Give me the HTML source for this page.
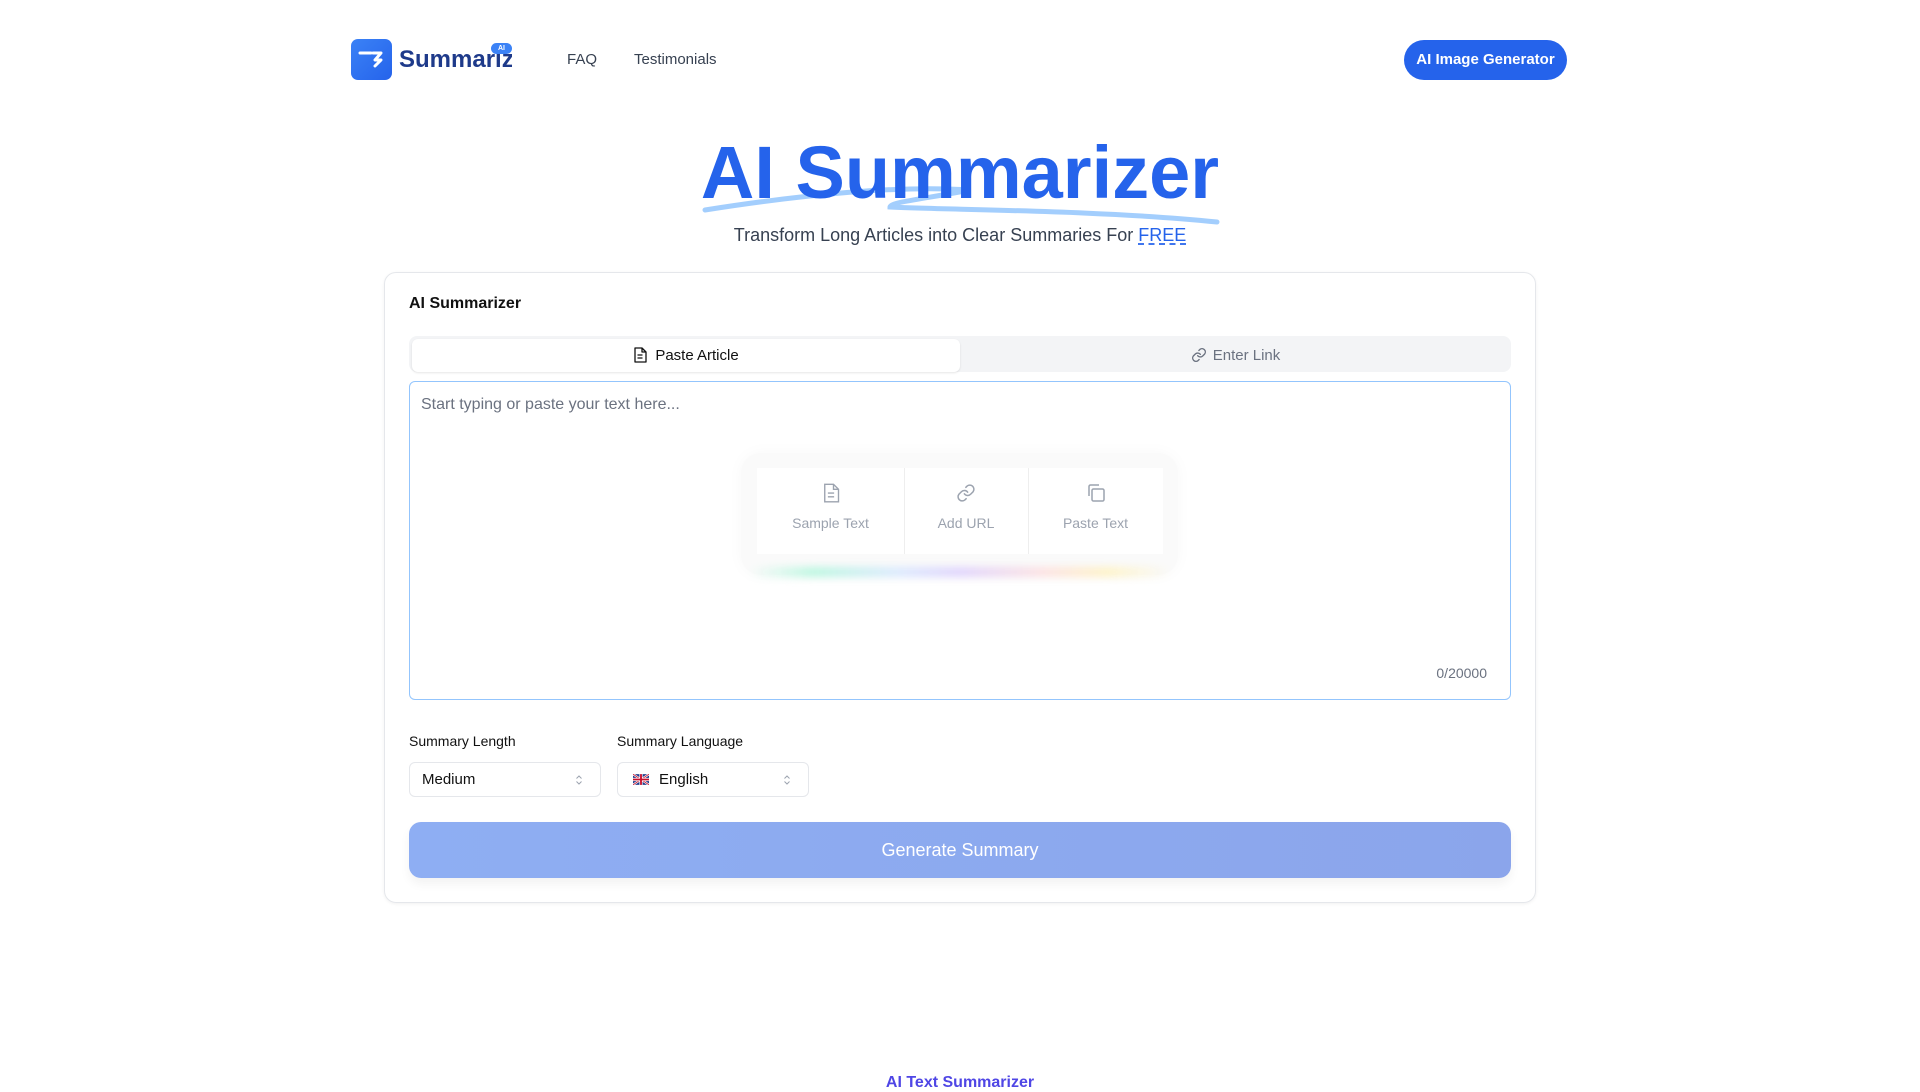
<!DOCTYPE html>
<html><head><meta charset="utf-8">
<style>
*{box-sizing:border-box;margin:0;padding:0}
html,body{width:1920px;height:1080px;overflow:hidden;background:#fff;font-family:"Liberation Sans",sans-serif;color:#111}
.abs{position:absolute}
</style></head><body>
<!-- header -->
<div class="abs" style="left:351px;top:39px;width:41px;height:41px;border-radius:7px;background:linear-gradient(135deg,#3b82f6,#2563eb)">
<svg width="41" height="41" viewBox="0 0 41 41"><path d="M9 14h11M22 14h8l-6 7 6 0-6 6" stroke="#fff" stroke-width="3" fill="none" stroke-linecap="round" stroke-linejoin="round"/></svg>
</div>
<div class="abs" style="left:399px;top:46px;width:113px;height:30px;overflow:hidden;font-size:24px;font-weight:bold;color:#1e3a8a;white-space:nowrap">Summarizer</div>
<div class="abs" style="left:491px;top:43px;width:21px;height:11px;border-radius:6px;background:#3b82f6;color:#fff;font-size:7px;font-weight:bold;text-align:center;line-height:11px">AI</div>
<div class="abs" style="left:567px;top:51px;font-size:15px;color:#374151">FAQ</div>
<div class="abs" style="left:634px;top:51px;font-size:15px;color:#374151">Testimonials</div>
<div class="abs" style="left:1404px;top:40px;width:163px;height:40px;border-radius:20px;background:#2563eb;color:#fff;font-size:15px;font-weight:bold;text-align:center;line-height:40px">AI Image Generator</div>

<!-- hero -->
<svg class="abs" style="left:700px;top:170px" width="520" height="60" viewBox="0 0 520 60">
<path d="M5 40 C100 25 200 15 270 20 C230 28 190 32 190 37 C250 40 400 40 517 52" stroke="#93c5fd" stroke-width="5" fill="none" stroke-linecap="round" opacity="0.85"/>
</svg>
<div class="abs" style="left:0;width:1920px;top:128px;text-align:center;font-size:74px;font-weight:bold;color:#2563eb;line-height:90px">AI Summarizer</div>
<div class="abs" style="left:0;width:1920px;top:225px;text-align:center;font-size:18px;color:#374151">Transform Long Articles into Clear Summaries For <span style="color:#2563eb;text-decoration:underline dashed;text-underline-offset:3px">FREE</span></div>

<!-- card -->
<div class="abs" style="left:384px;top:272px;width:1152px;height:631px;border:1px solid #e5e7eb;border-radius:12px;box-shadow:0 1px 3px rgba(0,0,0,.06)"></div>
<div class="abs" style="left:409px;top:295px;font-size:16px;font-weight:bold;color:#111">AI Summarizer</div>
<div class="abs" style="left:409px;top:336px;width:1102px;height:36px;border-radius:8px;background:#f3f4f6"></div>
<div class="abs" style="left:412px;top:339px;width:548px;height:33px;border-radius:6px;background:#fff;box-shadow:0 1px 2px rgba(0,0,0,.1);font-size:15px;color:#111;text-align:center;line-height:33px">
<svg width="14" height="16" viewBox="0 0 14 16" style="vertical-align:-3px;margin-right:8px"><path d="M2 1h7l4 4v10H2z M9 1v4h4 M4.5 8h5M4.5 11h5" stroke="#111" stroke-width="1.3" fill="none" stroke-linejoin="round"/></svg>Paste Article</div>
<div class="abs" style="left:960px;top:339px;width:551px;height:33px;font-size:15px;color:#6b7280;text-align:center;line-height:33px">
<svg width="16" height="16" viewBox="0 0 24 24" style="vertical-align:-3px;margin-right:6px"><path d="M10 13a5 5 0 0 0 7.5.5l3-3a5 5 0 0 0-7-7l-1.7 1.7M14 11a5 5 0 0 0-7.5-.5l-3 3a5 5 0 0 0 7 7l1.7-1.7" stroke="#6b7280" stroke-width="2" fill="none" stroke-linecap="round"/></svg>Enter Link</div>

<div class="abs" style="left:409px;top:381px;width:1102px;height:319px;border:1px solid #93c5fd;border-radius:6px"></div>
<div class="abs" style="left:421px;top:396px;font-size:16px;color:#6b7280">Start typing or paste your text here...</div>
<div class="abs" style="left:741px;top:453px;width:437px;height:122px;border-radius:20px;background:#fafafa;box-shadow:0 0 16px rgba(0,0,0,.03)"></div>
<div class="abs" style="left:757px;top:468px;width:406px;height:86px;background:#fff"></div>
<div class="abs" style="left:904px;top:468px;width:1px;height:86px;background:#eee"></div>
<div class="abs" style="left:1028px;top:468px;width:1px;height:86px;background:#eee"></div>
<div class="abs" style="left:750px;top:567px;width:420px;height:10px;border-radius:5px;filter:blur(4px);background:linear-gradient(90deg,transparent,#bbf7e0 15%,#dbeafe 35%,#e0d4fd 50%,#fde2e2 70%,#fef3c7 85%,transparent)"></div>
<div class="abs" style="left:757px;top:483px;width:147px;text-align:center">
<svg width="18" height="20" viewBox="0 0 14 16"><path d="M2 1h7l4 4v10H2z M9 1v4h4 M4.5 8h5M4.5 11h5" stroke="#9ca3af" stroke-width="1.1" fill="none"/></svg>
<div style="font-size:14px;color:#9ca3af;margin-top:7px">Sample Text</div></div>
<div class="abs" style="left:904px;top:483px;width:124px;text-align:center">
<svg width="20" height="20" viewBox="0 0 24 24"><path d="M10 13a5 5 0 0 0 7.5.5l3-3a5 5 0 0 0-7-7l-1.7 1.7M14 11a5 5 0 0 0-7.5-.5l-3 3a5 5 0 0 0 7 7l1.7-1.7" stroke="#9ca3af" stroke-width="1.8" fill="none" stroke-linecap="round"/></svg>
<div style="font-size:14px;color:#9ca3af;margin-top:7px">Add URL</div></div>
<div class="abs" style="left:1028px;top:483px;width:135px;text-align:center">
<svg width="20" height="20" viewBox="0 0 20 20"><rect x="6" y="6" width="12" height="12" rx="1.5" stroke="#9ca3af" stroke-width="1.5" fill="none"/><path d="M3 13V3.5A1.5 1.5 0 0 1 4.5 2H13" stroke="#9ca3af" stroke-width="1.5" fill="none"/></svg>
<div style="font-size:14px;color:#9ca3af;margin-top:7px">Paste Text</div></div>
<div class="abs" style="left:1400px;top:665px;width:87px;text-align:right;font-size:14px;color:#6b7280">0/20000</div>

<div class="abs" style="left:409px;top:733px;font-size:14px;color:#111">Summary Length</div>
<div class="abs" style="left:617px;top:733px;font-size:14px;color:#111">Summary Language</div>
<div class="abs" style="left:409px;top:762px;width:192px;height:35px;border:1px solid #e5e7eb;border-radius:6px;font-size:15px;line-height:33px;padding-left:12px">Medium</div>
<svg class="abs" style="left:575px;top:774px" width="8" height="12" viewBox="0 0 8 12"><path d="M1.5 4.5L4 2l2.5 2.5M1.5 7.5L4 10l2.5-2.5" stroke="#9ca3af" stroke-width="1" fill="none"/></svg>
<div class="abs" style="left:617px;top:762px;width:192px;height:35px;border:1px solid #e5e7eb;border-radius:6px;font-size:15px;line-height:33px;padding-left:15px">
<svg width="16" height="11" viewBox="0 0 60 40" style="vertical-align:-1px;margin-right:10px"><rect width="60" height="40" fill="#1e3a8a"/><path d="M0 0L60 40M60 0L0 40" stroke="#fff" stroke-width="8"/><path d="M0 0L60 40M60 0L0 40" stroke="#c8102e" stroke-width="3"/><path d="M30 0v40M0 20h60" stroke="#fff" stroke-width="12"/><path d="M30 0v40M0 20h60" stroke="#c8102e" stroke-width="7"/></svg>English</div>
<svg class="abs" style="left:783px;top:774px" width="8" height="12" viewBox="0 0 8 12"><path d="M1.5 4.5L4 2l2.5 2.5M1.5 7.5L4 10l2.5-2.5" stroke="#9ca3af" stroke-width="1" fill="none"/></svg>

<div class="abs" style="left:409px;top:822px;width:1102px;height:56px;border-radius:12px;background:linear-gradient(90deg,#8eaef3,#8ba5eb);box-shadow:0 6px 10px rgba(0,0,0,.05);color:#fff;font-size:18px;text-align:center;line-height:56px">Generate Summary</div>

<div class="abs" style="left:0;width:1920px;top:1074px;text-align:center;font-size:16px;font-weight:bold;color:#4f46e5">AI Text Summarizer</div>
</body></html>
